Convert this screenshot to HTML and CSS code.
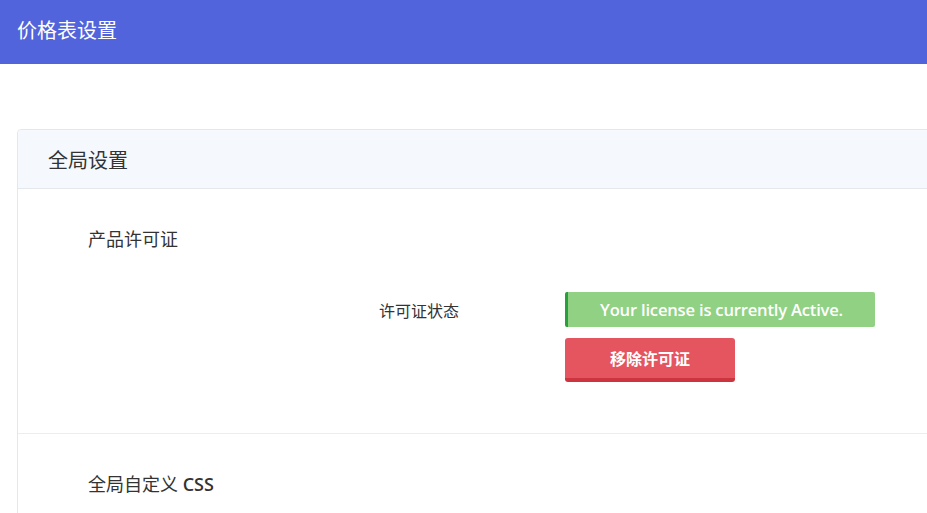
FILE: index.html
```html
<!DOCTYPE html>
<html lang="zh-CN">
<head>
<meta charset="utf-8">
<title>价格表设置</title>
<link rel="stylesheet" href="styles.css">
</head>
<body>
<header class="topbar">
  <h1 class="topbar-title">价格表设置</h1>
</header>
<main class="main">
  <section class="card">
    <div class="card-header">全局设置</div>
    <div class="section">
      <h2 class="section-title">产品许可证</h2>
      <div class="row">
        <div class="row-label">许可证状态</div>
        <div class="row-field">
          <div class="license-ok">Your license is currently Active.</div>
          <button class="btn-remove" type="button">移除许可证</button>
        </div>
      </div>
    </div>
    <div class="section">
      <h2 class="section-title">全局自定义 <span class="latin">CSS</span></h2>
    </div>
  </section>
</main>
</body>
</html>
```

FILE: styles.css
```css
html, body {
  margin: 0;
  padding: 0;
  background: #ffffff;
  overflow: hidden;
}
body {
  font-family: "Open Sans", "Noto Sans CJK SC", sans-serif;
  color: #333333;
}
.topbar {
  height: 64px;
  background: #5164db;
  display: flex;
  align-items: center;
  padding-left: 17px;
}
.topbar-title {
  margin: 0;
  font-size: 20px;
  font-weight: 400;
  color: #ffffff;
  line-height: 24px;
  padding-bottom: 2px;
}
.main {
  padding: 65px 0 0 17px;
  margin-right: -40px;
}
.card {
  border: 1px solid #e4e8ee;
  border-radius: 4px;
  background: #ffffff;
}
.card-header {
  height: 58px;
  background: #f5f8fd;
  border-bottom: 1px solid #e4e8ee;
  border-radius: 4px 4px 0 0;
  padding-left: 30px;
  display: flex;
  align-items: center;
  font-size: 20px;
  color: #333;
}
.section {
  padding: 38px 0 51px 70px;
  border-bottom: 1px solid #ebedf0;
}
.section-title {
  margin: 0;
  font-size: 18px;
  font-weight: 400;
  line-height: 24px;
  color: #333;
}
.latin {
  font-weight: 600;
}
.row {
  display: flex;
  margin-top: 41px;
}
.row-label {
  margin-left: 291px;
  width: 186px;
  font-size: 16px;
  line-height: 35px;
  padding-top: 2px;
  color: #333;
}
.row-field {
  display: flex;
  flex-direction: column;
  align-items: flex-start;
  gap: 11px;
}
.license-ok {
  width: 310px;
  height: 35px;
  box-sizing: border-box;
  background: #90d184;
  border-left: 3px solid #28a03c;
  border-radius: 2px;
  color: #ffffff;
  font-size: 16.6px;
  font-weight: 600;
  display: flex;
  align-items: center;
  justify-content: center;
  letter-spacing: -0.2px;
}
.btn-remove {
  width: 170px;
  height: 44px;
  box-sizing: border-box;
  background: #e5555f;
  border: none;
  border-bottom: 4px solid #cc3540;
  border-radius: 3px;
  color: #ffffff;
  font-family: "Noto Sans CJK SC", sans-serif;
  font-size: 16px;
  font-weight: 700;
  padding: 0;
  cursor: pointer;
}
```
